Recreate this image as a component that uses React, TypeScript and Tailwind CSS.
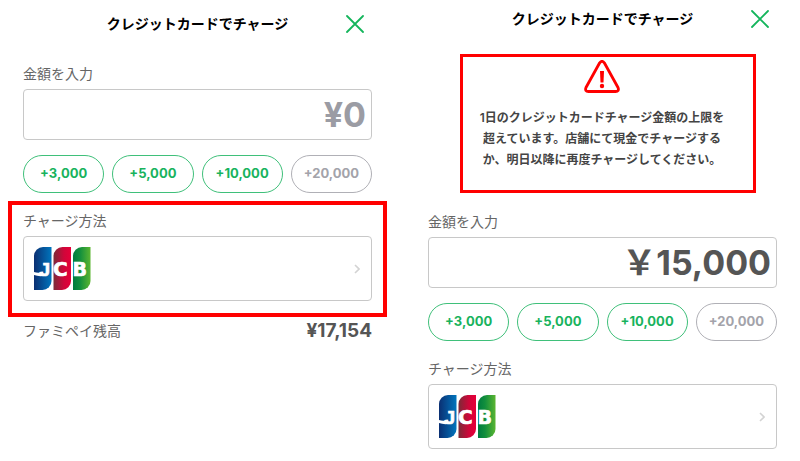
import { useId, useState } from 'react'
import clsx from 'clsx'

const amounts = [
  { label: '+3,000', value: 3000 },
  { label: '+5,000', value: 5000 },
  { label: '+10,000', value: 10000 },
  { label: '+20,000', value: 20000, disabled: true },
]

function JcbLogo() {
  return (
    <svg width="57" height="43" viewBox="0 0 57 43" role="img" aria-label="JCB">
      <defs>
        <linearGradient id="jcb-blue">
          <stop offset="0" stopColor="#0b2f72" />
          <stop offset="1" stopColor="#0075bd" />
        </linearGradient>
        <linearGradient id="jcb-red">
          <stop offset="0" stopColor="#7b2b37" />
          <stop offset="0.6" stopColor="#d0063a" />
          <stop offset="1" stopColor="#e60039" />
        </linearGradient>
        <linearGradient id="jcb-green">
          <stop offset="0" stopColor="#007b3f" />
          <stop offset="0.4" stopColor="#128f3d" />
          <stop offset="1" stopColor="#5bb531" />
        </linearGradient>
      </defs>
      <path d="M9 0H17.500V34A9 9 0 0 1 8.500 43H0V9A9 9 0 0 1 9 0Z" fill="url(#jcb-blue)" />
      <path d="M28.500 0H37V34A9 9 0 0 1 28 43H19.500V9A9 9 0 0 1 28.500 0Z" fill="url(#jcb-red)" />
      <path d="M48 0H56.500V34A9 9 0 0 1 47.500 43H39V9A9 9 0 0 1 48 0Z" fill="url(#jcb-green)" />
      {/* white tail of the J running to the edge */}
      <path d="M0 25Q4 26.500 9 25V29Q4 29.500 0 28Z" fill="#fff" />
      <g fill="#fff" stroke="#fff" strokeWidth="0.700" fontWeight="700" fontSize="19" fontFamily="'DejaVu Sans', sans-serif">
        <text x="5.500" y="28.500" fontFamily="'Liberation Sans', sans-serif">J</text>
        <text x="19" y="29" fontSize="20">C</text>
        <text x="38.500" y="28.500">B</text>
      </g>
    </svg>
  )
}

function Header() {
  return (
    <header className="grid h-6 grid-cols-[1fr_auto_1fr] items-center">
      <h1 className="col-start-2 text-sm font-semibold text-black">クレジットカードでチャージ</h1>
      <button type="button" aria-label="閉じる" className="mr-2 justify-self-end">
        <svg width="18" height="18" viewBox="0 0 18 18" fill="none" stroke="#14b55c" strokeWidth="1.800" strokeLinecap="round">
          <path d="M1 1L17 17M17 1L1 17" />
        </svg>
      </button>
    </header>
  )
}

function AmountField({ initial }: { initial: string }) {
  const id = useId()
  const [value, setValue] = useState(initial)
  const current = Number(value.replace(/\D/g, ''))

  return (
    <div>
      <label htmlFor={id} className="block text-sm leading-5">金額を入力</label>
      <input
        id={id}
        inputMode="numeric"
        value={value}
        onChange={e => setValue(e.target.value)}
        className={clsx(
          'mt-[5px] block h-[51px] w-full rounded border border-[#c8c8c8] px-[5px] text-right text-[34px] font-bold outline-none',
          current === 0 ? 'text-[#9b9ca4]' : 'text-[#555555]',
        )}
      />
      <div className="mt-[15px] grid grid-cols-4 gap-2">
        {amounts.map(a => (
          <button
            key={a.label}
            type="button"
            disabled={a.disabled}
            onClick={() => setValue('￥' + (current + a.value).toLocaleString('en-US'))}
            className={clsx(
              'h-[38px] rounded-full border text-[13px] font-bold',
              a.disabled ? 'border-[#b0b0b6] text-[#a3a3aa]' : 'border-[#3fc07a] text-[#18b35d]',
            )}
          >
            {a.label}
          </button>
        ))}
      </div>
    </div>
  )
}

function PaymentMethod() {
  const id = useId()
  return (
    <div>
      <label htmlFor={id} className="block text-sm leading-5">チャージ方法</label>
      <button
        id={id}
        type="button"
        className="mt-[5px] flex h-[65px] w-full items-center justify-between rounded border border-[#c8c8c8] pr-[11px] pl-2.5"
      >
        <JcbLogo />
        <svg width="6" height="10" viewBox="0 0 6 10" fill="none" stroke="#d3d3d3" strokeWidth="1.600">
          <path d="M1 1L5 5L1 9" />
        </svg>
      </button>
    </div>
  )
}

function WarningIcon() {
  return (
    <svg width="36" height="33" viewBox="0 0 36 33" fill="none">
      <path
        d="M15.700 2.800Q18 -0.200 20.300 2.800L34 27.500Q35.500 31.300 31.500 31.500H4.500Q0.500 31.300 2 27.500Z"
        stroke="#ff0000"
        strokeWidth="2.800"
        strokeLinejoin="round"
      />
      <path d="M16 11H20L19.500 22.500H16.500Z" fill="#ff0000" />
      <circle cx="18" cy="26" r="2.200" fill="#ff0000" />
    </svg>
  )
}

export default function App() {
  return (
    <main className="grid grid-cols-2 bg-white pb-3 font-[Inter,'Noto_Sans_CJK_JP',sans-serif] text-[#666666]" lang="ja">
      {/* Before charging */}
      <section className="pt-3 pr-7 pl-[23px]">
        <Header />
        <div className="mt-7">
          <AmountField initial="¥0" />
        </div>
        <div className="-mx-[15px] mt-2 border-4 border-[#ff0000] px-[11px] pt-1.5 pb-3">
          <PaymentMethod />
        </div>
        <div className="mt-1 flex items-center justify-between leading-5">
          <span className="text-sm">ファミペイ残高</span>
          <span className="text-[19px] leading-5 font-bold text-[#555555]">¥17,154</span>
        </div>
      </section>

      {/* Over the daily limit */}
      <section className="pt-[7px] pr-[23px] pl-7">
        <Header />
        <div
          role="alert"
          className="mt-[23px] mr-[21px] ml-8 flex flex-col items-center border-3 border-[#ff0000] pt-[3px] pr-3 pb-5"
        >
          <WarningIcon />
          <p className="mt-3.5 text-center text-xs leading-[21px] font-semibold whitespace-nowrap text-[#444444]">
            1日のクレジットカードチャージ金額の上限を<br />
            超えています。店舗にて現金でチャージする<br />
            か、明日以降に再度チャージしてください。
          </p>
        </div>
        <div className="mt-[19px]">
          <AmountField initial="￥15,000" />
        </div>
        <div className="mt-[18px]">
          <PaymentMethod />
        </div>
      </section>
    </main>
  )
}
